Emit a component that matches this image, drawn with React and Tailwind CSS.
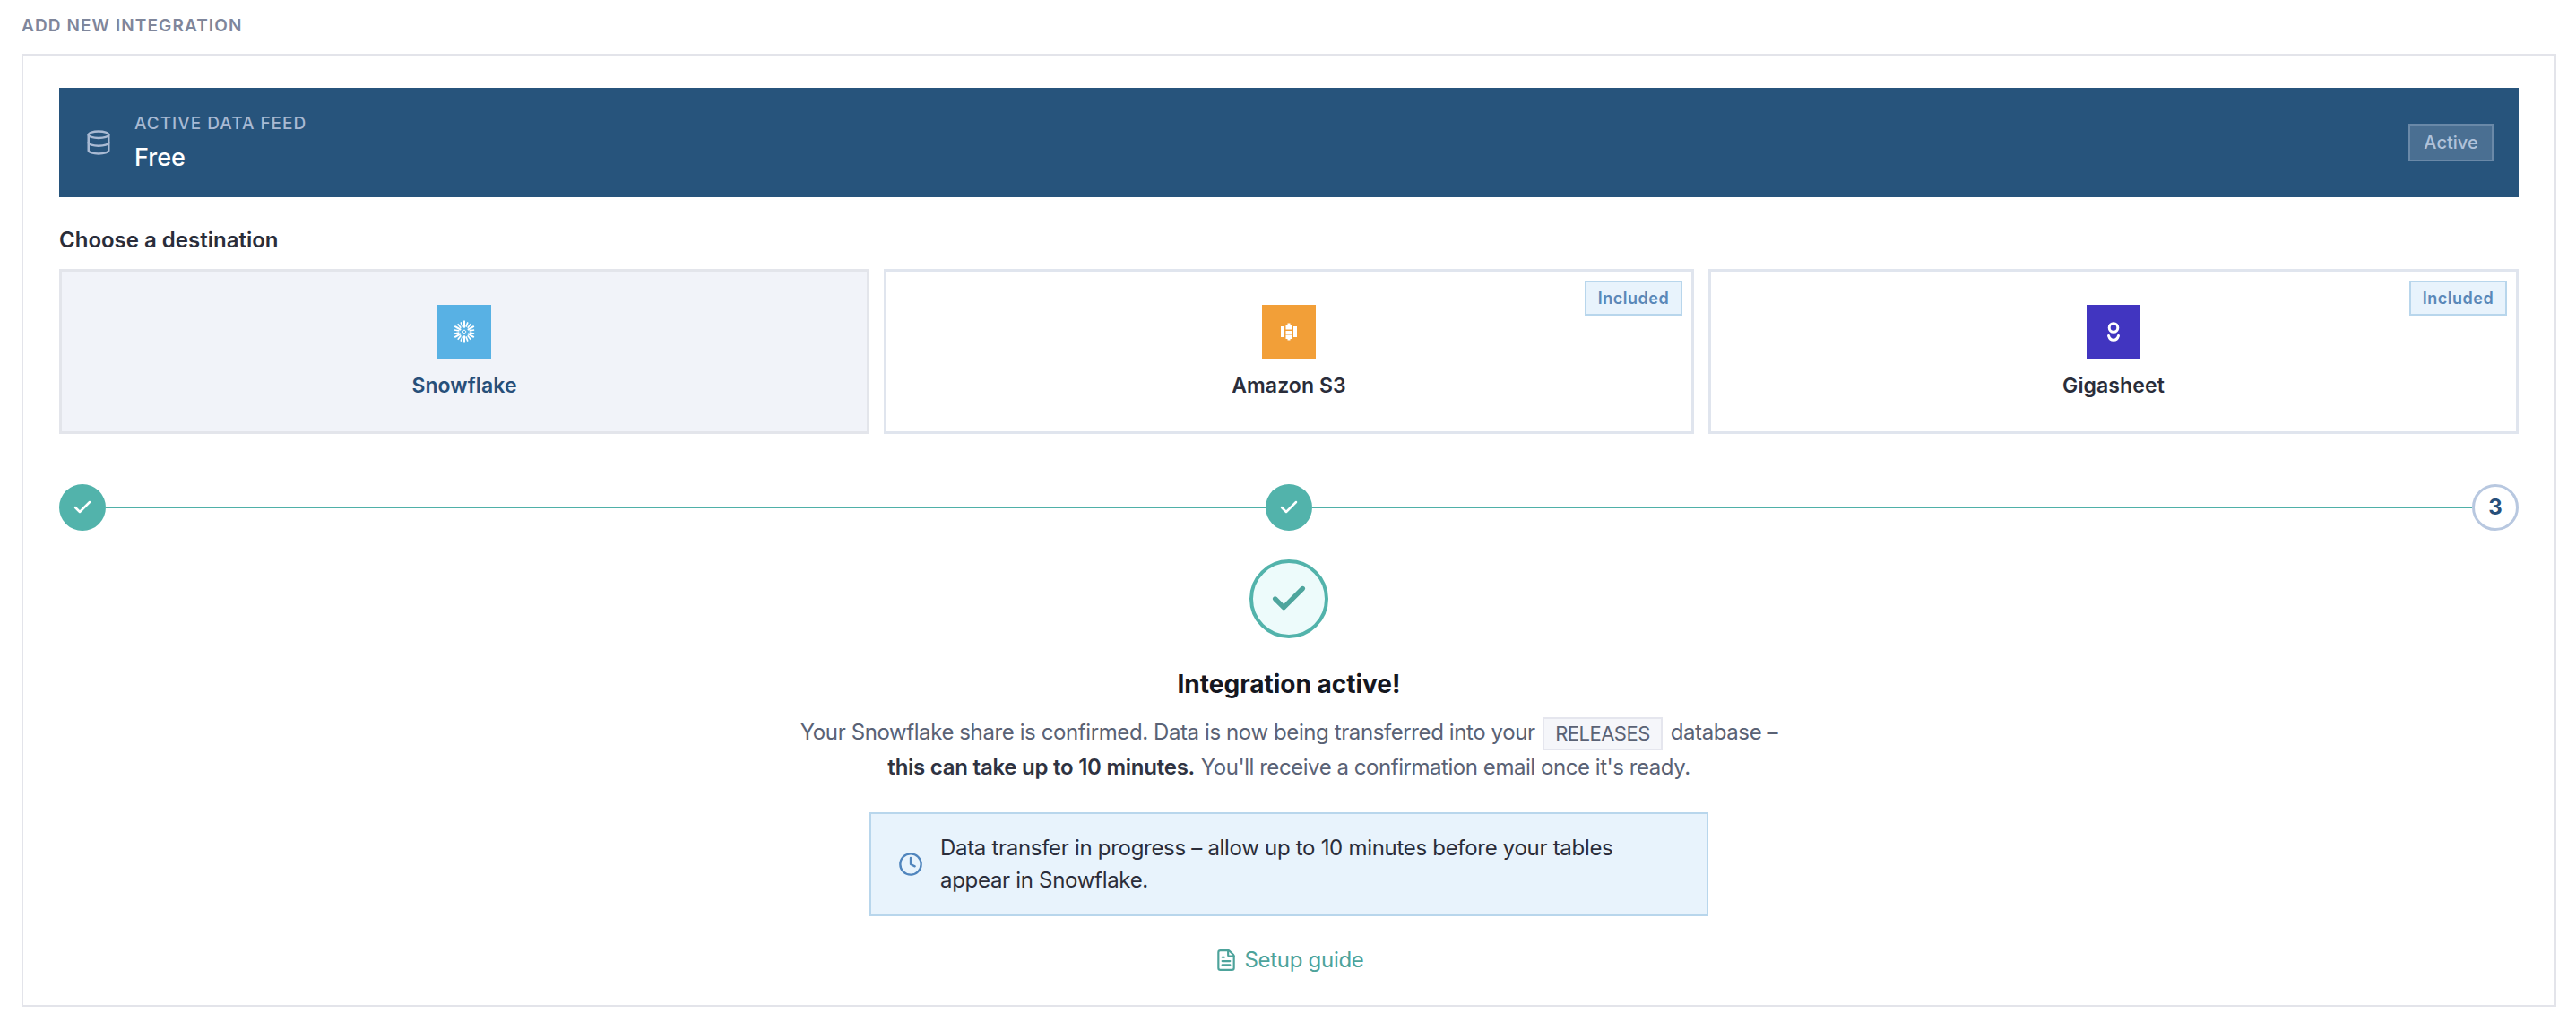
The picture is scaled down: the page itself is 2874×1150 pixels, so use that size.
import { Check, Clock, Database, FileText } from "lucide-react";

const font = "font-['Inter','Liberation_Sans',sans-serif]";

const arms = [0, 60, 120, 180, 240, 300];

const SnowflakeLogo = () => (
  <svg width="26" height="26" viewBox="0 0 24 24" fill="none" stroke="#fff" strokeWidth="1.5">
    {arms.map((angle) => (
      <g key={angle} transform={`rotate(${angle} 12 12)`}>
        <path d="M12 0.5V8" strokeWidth="1.9" />
        <path d="M8.4 2.2L10.3 7" />
        <path d="M15.6 2.2L13.7 7" />
      </g>
    ))}
    <path d="M12 10L14 12L12 14L10 12Z" strokeWidth="0.9" />
  </svg>
);

const S3Logo = () => (
  <svg width="18" height="20" viewBox="0 0 18 20" fill="#fff">
    <rect x="0" y="4" width="4" height="12" />
    <rect x="14" y="4" width="4" height="12" />
    <path d="M5.5 2H7.5V0.6H10.5V2H12.5V7.5H5.5Z" />
    <rect x="5.5" y="9" width="7" height="3" />
    <path d="M5.5 13.5H12.5V18H10.5V19.4H7.5V18H5.5Z" />
  </svg>
);

const GigasheetLogo = () => (
  <svg width="16" height="22" viewBox="0 0 16 22" fill="none" stroke="#fff" strokeWidth="3">
    <circle cx="8" cy="6.5" r="4.8" />
    <path d="M2.5 15.5C3.5 18.8 5.5 20.3 8 20.3S12.5 18.8 13.5 15.5" strokeLinecap="round" />
  </svg>
);

const destinations = [
  { name: "Snowflake", color: "bg-[#58b1e4]", logo: <SnowflakeLogo />, selected: true },
  { name: "Amazon S3", color: "bg-[#f29f38]", logo: <S3Logo />, included: true },
  { name: "Gigasheet", color: "bg-[#4135c0]", logo: <GigasheetLogo />, included: true },
];

const DestinationCard = ({ name, color, logo, selected, included }) => (
  <div
    className={`relative flex h-[184px] flex-col items-center border-[3px] pt-[37px] ${
      selected ? "border-[#e3e5eb] bg-[#f1f3f9]" : "border-[#e0e5ee] bg-white"
    }`}
  >
    {included && (
      <span className="absolute right-[10px] top-[10px] flex h-[39px] w-[109px] items-center justify-center border-2 border-[#b8d6ec] bg-[#e8f3fc] text-[18px] font-semibold tracking-[0.5px] text-[#5a88b8]">
        Included
      </span>
    )}
    <div className={`flex h-[60px] w-[60px] items-center justify-center ${color}`}>{logo}</div>
    <div
      className={`mt-[14px] text-[23px] font-semibold leading-[32px] tracking-[0.1px] ${
        selected ? "text-[#274f7a]" : "text-[#2a2d3a]"
      }`}
    >
      {name}
    </div>
  </div>
);

const DoneStep = () => (
  <div className="flex h-[52px] w-[52px] shrink-0 items-center justify-center rounded-full bg-[#52b3ab]">
    <Check size={24} strokeWidth={2.5} color="#fff" />
  </div>
);

export default function App() {
  return (
    <div className={`min-h-[1150px] bg-white pl-[24px] pr-[22px] pt-[17px] ${font}`}>
      <h2 className="text-[19px] font-semibold uppercase leading-[24px] tracking-[1.1px] text-[#7f869b]">
        Add new integration
      </h2>

      <div className="mt-[19px] border-2 border-[#e3e4ea] px-[40px] pb-[31px] pt-[36px]">
        <div className="flex h-[122px] items-center justify-between bg-[#27547c] pl-[29px] pr-[28px]">
          <div className="flex items-center gap-[25px]">
            <Database size={30} strokeWidth={2} color="#a9bad3" />
            <div>
              <div className="text-[19px] font-medium uppercase leading-[28px] tracking-[1px] text-[#a9bad3]">
                Active data feed
              </div>
              <div className="mt-[6px] text-[27px] font-medium leading-[36px] text-white">Free</div>
            </div>
          </div>
          <span className="flex h-[42px] w-[95px] items-center justify-center border-2 border-[#6a89a8] bg-[#4a6f92] text-[20px] font-medium text-[#b0c2da]">
            Active
          </span>
        </div>

        <div className="mt-[32px] text-[24px] font-semibold leading-[32px] text-[#2a2d3a]">
          Choose a destination
        </div>
        <div className="mt-[16px] grid grid-cols-3 gap-[16px]">
          {destinations.map((d) => (
            <DestinationCard key={d.name} {...d} />
          ))}
        </div>

        <div className="mt-[56px] flex items-center">
          <DoneStep />
          <div className="h-[2px] flex-1 bg-[#4fb0a8]" />
          <DoneStep />
          <div className="h-[2px] flex-1 bg-[#4fb0a8]" />
          <div className="flex h-[52px] w-[52px] shrink-0 items-center justify-center rounded-full border-[3px] border-[#b8c8e0] bg-white text-[24px] font-bold text-[#274f7a]">
            3
          </div>
        </div>

        <div className="flex flex-col items-center">
          <div className="mt-[32px] flex h-[88px] w-[88px] items-center justify-center rounded-full border-4 border-[#52b3ab] bg-[#edfbfb]">
            <Check size={46} strokeWidth={2.8} color="#4ea59d" />
          </div>
          <h3 className="mt-[31px] text-[28px] font-bold leading-[40px] text-[#15171f]">Integration active!</h3>
          <p className="mt-[14px] text-center text-[24px] leading-[39px] text-[#5a6275]">
            <span className="tracking-[-0.4px]">
              Your Snowflake share is confirmed. Data is now being transferred into your{" "}
            </span>
            <code className="mx-[2px] my-[-4px] inline-flex h-[37px] w-[134px] items-center justify-center border-2 border-[#e5e6ee] bg-[#f5f6fa] align-middle font-['Inter','Liberation_Sans',sans-serif] text-[22px] tracking-[-0.5px]">
              RELEASES
            </code>{" "}
            <span className="tracking-[-0.4px]">database –</span>
            <br />
            <strong className="font-semibold tracking-[-0.25px] text-[#2f3341]">
              this can take up to 10 minutes.
            </strong>{" "}
            <span className="tracking-[-0.45px]">You'll receive a confirmation email once it's ready.</span>
          </p>

          <div className="mt-[31px] flex h-[116px] w-[936px] items-center gap-[19px] border-2 border-[#b8d6ec] bg-[#e8f3fc] pl-[30px] pr-[60px]">
            <Clock size={28} strokeWidth={2} color="#5085bd" className="shrink-0" />
            <p className="text-[24px] leading-[36px] tracking-[-0.3px] text-[#2a2d3a]">
              Data transfer in progress – allow up to 10 minutes before your tables appear in Snowflake.
            </p>
          </div>

          <a className="mt-[29px] flex items-center gap-[8px] text-[24px] leading-[39px] tracking-[-0.3px] text-[#4da39b]">
            <FileText size={26} strokeWidth={2} />
            Setup guide
          </a>
        </div>
      </div>
    </div>
  );
}
